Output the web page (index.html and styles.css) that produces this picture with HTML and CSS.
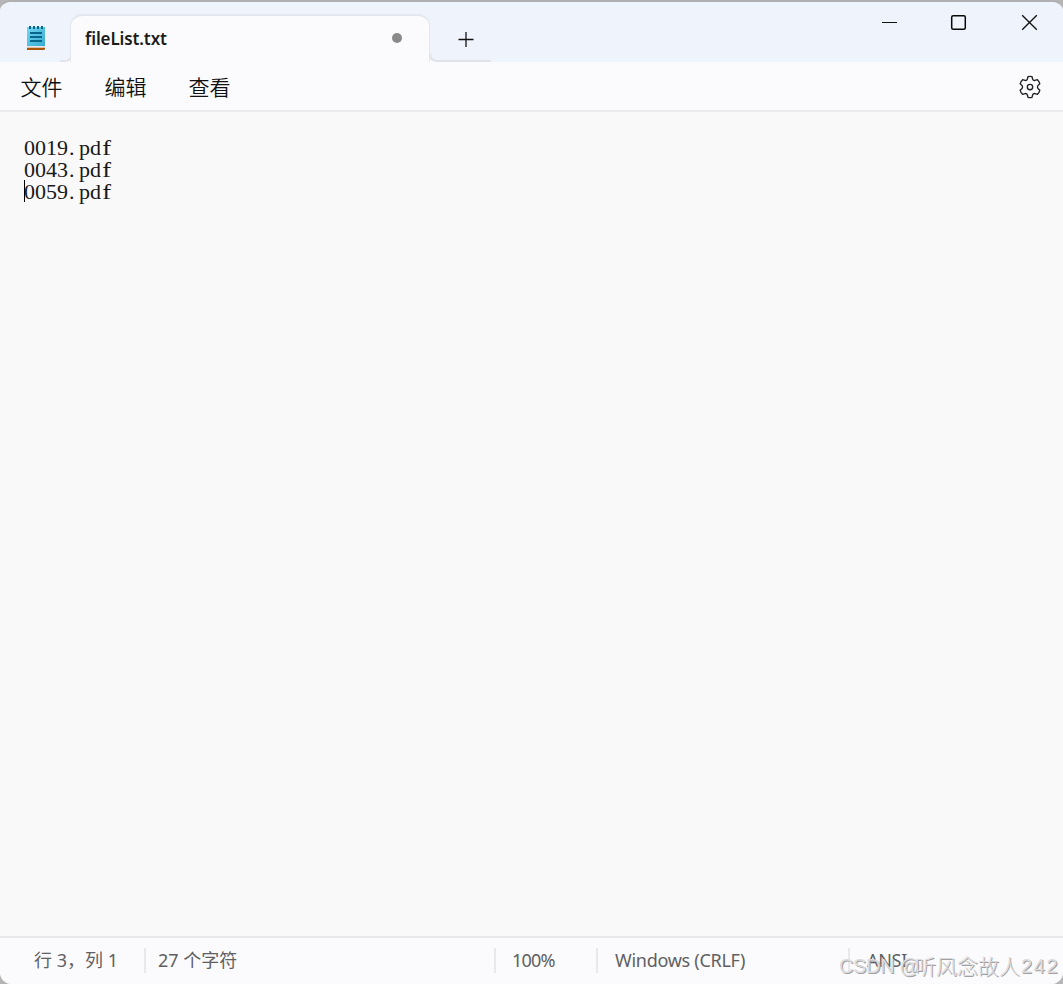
FILE: index.html
```html
<!DOCTYPE html>
<html lang="zh-CN">
<head>
<meta charset="utf-8">
<title>fileList.txt</title>
<link rel="stylesheet" href="styles.css">
</head>
<body>
<div class="window">
  <header class="titlebar">
    <div class="app-icon">
      <svg width="20" height="26" viewBox="0 0 20 26">
        <defs><linearGradient id="pad" x1="0" y1="0" x2="1" y2="1"><stop offset="0" stop-color="#72d8f0"/><stop offset="1" stop-color="#37abd0"/></linearGradient></defs>
        <path d="M1 22.500h18v1q0 1.500-1.500 1.500H1z" fill="#ac5509"/>
        <path d="M1 20h18v2.500H1z" fill="#e9e4e2"/>
        <path d="M1 2h18v19H1z" fill="url(#pad)"/>
        <path d="M3 1h2v3H3zM7 1h2v3H7zM11 1h2v3h-2zM15 1h2v3h-2zM4 7h12v2H4zM4 11h12v2H4zM4 15h12v2H4z" fill="#08668d"/>
      </svg>
    </div>
    <svg class="tab-curve" width="12" height="12" viewBox="0 0 12 12"><path d="M12 0v12H0v-1h4q7 0 7-7V0z" fill="#fbfbfd"/><path d="M0 11h5q6 0 6-6V0" fill="none" stroke="#e2e4ea" stroke-width="2"/></svg>
    <div class="tab"><span class="tab-name">fileList.txt</span><span class="dirty"></span></div>
    <div class="new-tab">
      <svg width="61" height="48" viewBox="0 0 61 48"><path d="M0 48V38q0 9 9 9h52v1z" fill="#fbfbfd"/><path d="M0 39q0 8 7 8h54" fill="none" stroke="#e0e3e8" stroke-width="2"/><path d="M28.500 25.500h15M36 18v15" stroke="#111" stroke-width="1.300"/></svg>
    </div>
    <div class="controls">
      <svg width="17" height="17" viewBox="0 0 17 17"><path d="M1 8.500h15" stroke="#111"/></svg>
      <svg width="17" height="17" viewBox="0 0 17 17"><rect x="1.700" y="1.700" width="13.600" height="13.600" rx="1.500" fill="none" stroke="#080808" stroke-width="1.500"/></svg>
      <svg width="17" height="17" viewBox="0 0 17 17"><path d="M1.200 1.200l14.600 14.600M15.800 1.200L1.200 15.800" stroke="#111" stroke-width="1.350"/></svg>
    </div>
  </header>
  <nav class="menu">
    <span>文件</span><span>编辑</span><span>查看</span>
    <svg class="gear" width="24" height="24" viewBox="0 0 24 24" fill="none" stroke="#202020" stroke-width="1.350" stroke-linejoin="round"><path d="M10 1.700Q12 1.100 14 1.700L14.700 4.200Q15.300 5.800 17 5.400L19.400 4.700Q21.300 6.500 21.800 8.700L20 10.400Q18.800 12 20 13.600L21.800 15.300Q21.300 17.500 19.400 19.300L17 18.600Q15.300 18.200 14.700 19.800L14 22.300Q12 22.900 10 22.300L9.300 19.800Q8.700 18.200 7 18.600L4.600 19.300Q2.700 17.500 2.200 15.300L4 13.600Q5.200 12 4 10.400L2.200 8.700Q2.700 6.500 4.600 4.700L7 5.400Q8.700 5.800 9.300 4.200Z"/><circle cx="12" cy="12" r="2.700"/></svg>
  </nav>
  <main class="editor">
    <div class="line">0019<span class="dot">.</span>pd<span class="eff">f</span></div>
    <div class="line">0043<span class="dot">.</span>pd<span class="eff">f</span></div>
    <div class="line current">0059<span class="dot">.</span>pd<span class="eff">f</span></div>
  </main>
  <footer class="status">
    <div class="cell position">行 3，列 1</div>
    <div class="cell count">27 个字符</div>
    <div class="cell zoom">100%</div>
    <div class="cell endings">Windows (CRLF)</div>
    <div class="cell encoding">ANSI</div>
  </footer>
  <div class="watermark"><span class="mark-latin">CSDN @</span><span class="mark-name">听风念故人</span><span class="mark-number">242</span></div>
</div>
</body>
</html>
```
FILE: styles.css
```css
* { box-sizing: border-box; }
body { margin: 0; background: #b5b5b6; font-family: "Noto Sans", "Noto Sans CJK SC", sans-serif; overflow: hidden; }
svg { display: block; flex: none; }
.window { position: relative; width: 1063px; height: 984px; display: flex; flex-direction: column; border-top: 2px solid #b0b0b1; border-radius: 11px 11px 12px 12px; background: #f9f9f9; overflow: hidden; }
.titlebar { height: 60px; flex: none; display: flex; align-items: flex-end; background: #eff3fb; }
.app-icon { width: 60px; height: 60px; padding: 23px 0 0 26px; }
.tab { width: 359px; height: 48px; display: flex; align-items: center; padding: 0 27px 0 14px; background: #fbfbfd; border: 2px solid #e4e7ed; border-width: 2px 1px 0 0; border-radius: 12px 12px 0 0; margin-left: -1px; box-shadow: -1px 0 0 #e4e7ed; }
.tab-name { font: 600 17px/24px "Noto Sans", sans-serif; letter-spacing: -.12px; color: #1b1b1b; white-space: nowrap; }
.dirty { width: 10px; height: 10px; margin: -2px 0 0 auto; border-radius: 50%; background: #8a8a8b; }
.new-tab { height: 48px; }
.controls { display: flex; gap: 53px; margin: 0 25px 31px auto; }
.controls svg:nth-child(2) { margin: 0 1px 0 -1px; }
.menu { height: 50px; flex: none; display: flex; align-items: center; gap: 42px; padding: 0 21px 0 20.5px; background: #fbfbfd; border-bottom: 2px solid #ebebed; font: 350 21px/30px "Noto Sans CJK SC", "Noto Sans CJK SC DemiLight", sans-serif; color: #111; }
.menu span { margin-top: -1px; }
.gear { margin: 2px 0 0 auto; }
.editor { flex: 1; padding: 25px 24px; font: 22px/22px "Liberation Serif", serif; color: #181818; }
.line { height: 22px; white-space: nowrap; }
.dot, .eff { display: inline-block; width: 11px; }
.dot { padding-left: 1px; }
.eff { padding-left: 1px; transform: scaleX(1.2); transform-origin: left; }
.current { position: relative; }
.current::before { content: ""; position: absolute; left: 0; top: -1px; width: 1px; height: 22px; background: #000; }
.status { height: 48px; flex: none; display: flex; align-items: center; border-top: 2px solid #e9e9eb; background: #fbfbfd; font-size: 18px; line-height: 25px; color: #606062; }
.cell { height: 25px; margin-top: -2px; border-left: 2px solid #e9e9eb; white-space: nowrap; }
.position { width: 144px; padding-left: 32px; border-color: transparent; }
.count { width: 350px; padding-left: 12px; }
.zoom { width: 102px; padding-left: 16px; letter-spacing: -.8px; }
.endings { width: 252px; padding-left: 17px; letter-spacing: -.28px; }
.encoding { width: 215px; padding-left: 17px; letter-spacing: -.3px; }
.watermark { position: absolute; left: 839px; top: 949px; display: flex; line-height: 28px; font-size: 20px; color: #dcdcde; text-shadow: 1px 1px 0 #a0a0a3; white-space: nowrap; }
.mark-latin { width: 76px; font-family: "Liberation Sans", sans-serif; letter-spacing: -.35px; padding-top: 1px; }
.mark-name { width: 106px; font: 300 21px/28px "Noto Sans CJK SC", sans-serif; }
.mark-number { font-family: "Liberation Sans", sans-serif; letter-spacing: 1.6px; padding-top: 1px; }
```
